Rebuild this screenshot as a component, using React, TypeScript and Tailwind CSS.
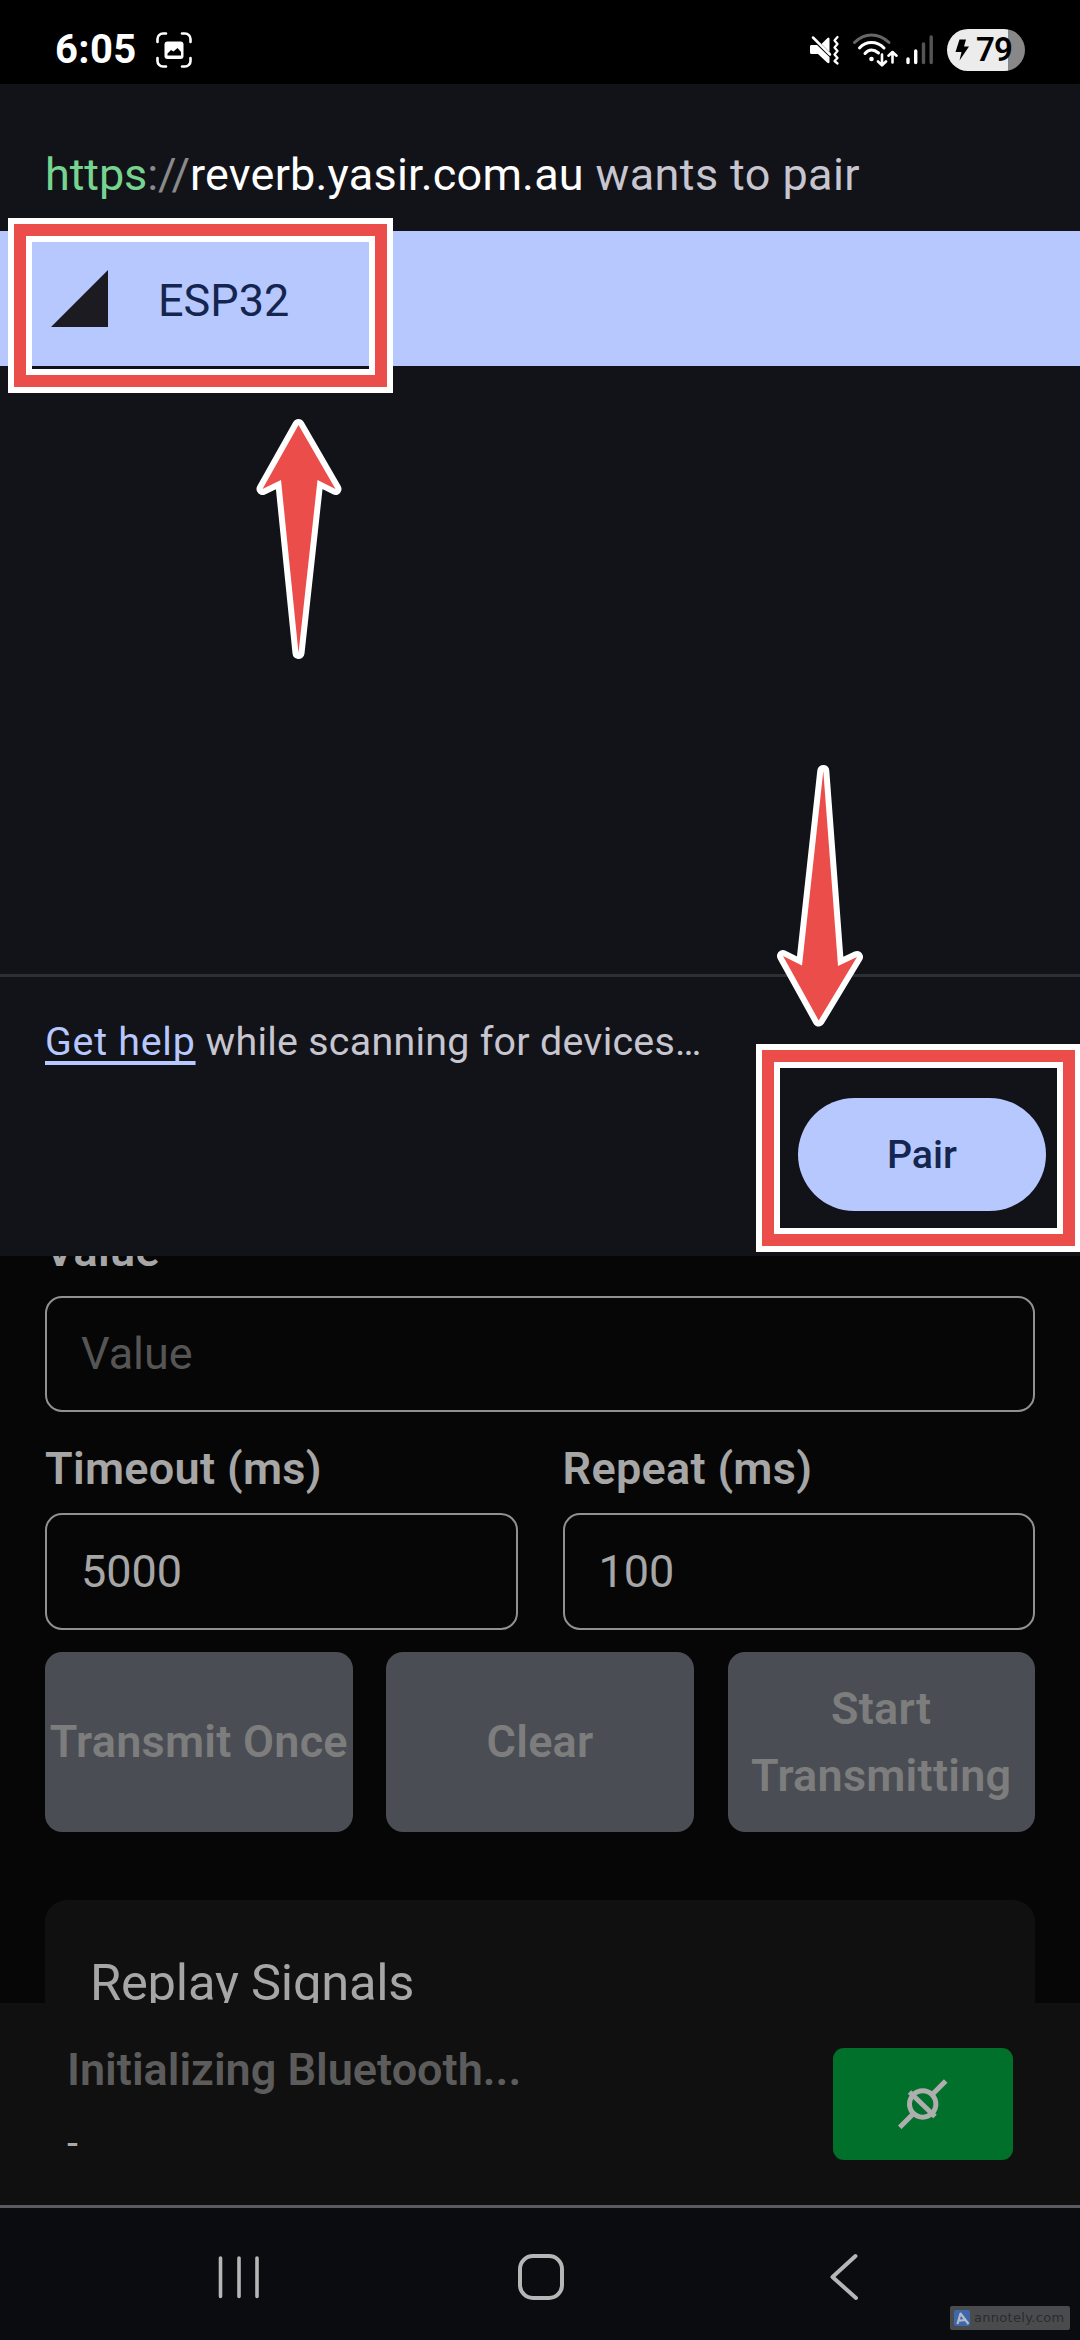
import React from "react";

function StatusBar() {
  return (
    <header className="flex h-[84px] shrink-0 items-center justify-between bg-black pt-[16px] pl-[55px] pr-[55px] text-white">
      <div className="flex items-center gap-[19px]">
        <span className="text-[40px] leading-[46px] font-bold tracking-[0.4px]">6:05</span>
        <svg className="h-[36px] w-[36px]" viewBox="0 0 36 36" fill="none">
          <path
            d="M1.5 10V7a5.5 5.5 0 0 1 5.500-5.500H10M26 1.500H29A5.500 5.500 0 0 1 34.500 7V10M34.500 26V29A5.500 5.500 0 0 1 29 34.500H26M10 34.500H7A5.500 5.500 0 0 1 1.500 29V26"
            stroke="white"
            strokeWidth="2.600"
            strokeLinecap="round"
          />
          <rect x="8.500" y="9.500" width="19" height="17.500" rx="3" fill="white" />
          <path d="M11.500 23.500V21.500L15 18L17.500 19.500L21.500 16L25 20V23.500Z" fill="black" />
        </svg>
      </div>
      <div className="flex items-center">
        <svg className="h-[36px] w-[32px]" viewBox="0 0 32 36" fill="none">
          <path d="M2 13Q1 13 1 14.500V20.500Q1 22 2.500 22H9L18 30.500Q20.500 32 20.500 30V25L8 13Z" fill="white" />
          <path d="M12.500 12L18.500 6Q20.500 4.500 20.500 7V20Z" fill="white" />
          <path d="M4 5.500L21 22.500" stroke="white" strokeWidth="2.500" strokeLinecap="round" />
          <path
            d="M28.500 5L25.500 8.500L28.500 12L25.500 15.500L28.500 19L25.500 22.500L28.500 26L25.500 29L28.500 31.500"
            stroke="white"
            strokeWidth="2.300"
            strokeLinecap="round"
            strokeLinejoin="round"
          />
        </svg>
        <svg className="ml-[11px] h-[36px] w-[46px]" viewBox="0 0 46 36" fill="none" strokeLinecap="round">
          <path d="M2.500 10.500Q10 3 19.500 3T37 10.500" stroke="#666" strokeWidth="3" />
          <path d="M7.500 16Q12.500 10.500 19.500 10.500T32 16" stroke="white" strokeWidth="3" />
          <path d="M13 21.500Q16 18 19.500 18T26.500 21" stroke="white" strokeWidth="3" />
          <circle cx="19.500" cy="27" r="2.300" fill="white" />
          <path
            d="M30 22.500V33M26 29.500L30 33.300L34 29.500M40.500 30.500V20M36.500 23.700L40.500 20L44.500 23.700"
            stroke="white"
            strokeWidth="2.600"
            strokeLinejoin="round"
          />
        </svg>
        <svg className="ml-[8px] h-[36px] w-[28px]" viewBox="0 0 28 36" strokeWidth="3.400" strokeLinecap="round">
          <path d="M2 27V30.500M9.700 19V30.500" stroke="white" />
          <path d="M17.500 12V30.500M25.200 5V30.500" stroke="#555" />
        </svg>
        <div className="ml-[13px] flex h-[42px] w-[78px] items-center rounded-full bg-[linear-gradient(90deg,#ececec_61px,#888888_61px)] pl-[8px] text-black">
          <svg className="h-[22px] w-[15px]" viewBox="0 0 15 22">
            <path d="M4.500 0.500H11L9 7.500H14L4.500 21.500L6.500 13H0.500Z" fill="black" />
          </svg>
          <span className="ml-[6px] text-[33px] leading-[42px] font-semibold tracking-[-0.8px]">79</span>
        </div>
      </div>
    </header>
  );
}

function PairDialog() {
  return (
    <section className="flex h-[1172px] shrink-0 flex-col bg-[#121318] text-[#c7c6d0]">
      <h1 className="h-[147px] whitespace-pre pt-[64px] pl-[45px] text-[45px] leading-[53px] font-normal tracking-[0.4px]">
        <span className="tracking-[-0.1px] text-[#77d490]">https</span>
        <span className="tracking-[-0.1px] text-[#8a8a8a]">://</span>
        <span className="tracking-[0.2px] text-white">reverb.yasir.com.au</span> wants to pair
      </h1>
      <div className="flex h-[135px] items-center bg-[#b6c8fe] pl-[51px] text-[#14264f]">
        <svg className="h-[57px] w-[57px]" viewBox="0 0 57 57">
          <path d="M0 57L57 0V57Z" fill="#1b1b21" />
        </svg>
        <span className="ml-[50px] pt-[4px] text-[45px] leading-[53px]">ESP32</span>
      </div>
      <div className="h-[608px]" />
      <div className="h-[3px] bg-[#2e2f33]" />
      <p className="pt-[42px] pl-[45px] text-[39.375px] leading-[46px] tracking-[0.27px]">
        <a className="tracking-[0.75px] text-[#b6c8fe] underline decoration-[3.5px] underline-offset-[6px] [text-decoration-skip-ink:none]">
          Get help
        </a>{" "}
        while scanning for devices…
      </p>
      <div className="mt-[33px] flex justify-end pr-[34px]">
        <button className="h-[113px] w-[248px] rounded-full bg-[#b6c8fe] text-[39.375px] font-medium text-[#14264f]">
          Pair
        </button>
      </div>
    </section>
  );
}

function Field({ label, children, muted }: { label: string; children: React.ReactNode; muted?: boolean }) {
  return (
    <div className="flex flex-col gap-[11.25px]">
      <label className="text-[45px] leading-[67.5px] font-semibold tracking-[0.3px]">{label}</label>
      <div
        className={
          "flex h-[116.25px] items-center rounded-[17px] border-2 border-[#919195] pl-[34px] text-[45px] " +
          (muted ? "text-[#555555]" : "text-[#a6a6a6]")
        }
      >
        {children}
      </div>
    </div>
  );
}

function ActionButton({ children }: { children: React.ReactNode }) {
  return (
    <button className="h-[180px] rounded-[17px] bg-[#4b4d54] text-center text-[45px] leading-[67.5px] font-semibold tracking-[0.25px] text-[#7d7d7d]">
      {children}
    </button>
  );
}

function PageContent() {
  return (
    <main className="h-[747px] shrink-0 overflow-hidden bg-[#060606] px-[45px] text-[#a6a6a6]">
      <div className="-mt-[39px] flex flex-col gap-[22.5px]">
        <Field label="Value" muted>
          Value
        </Field>
        <div className="grid grid-cols-2 gap-[45px]">
          <Field label="Timeout (ms)">5000</Field>
          <Field label="Repeat (ms)">100</Field>
        </div>
        <div className="grid grid-cols-3 gap-[33.75px]">
          <ActionButton>
            <span className="-mx-4 whitespace-nowrap">Transmit Once</span>
          </ActionButton>
          <ActionButton>Clear</ActionButton>
          <ActionButton>
            Start
            <br />
            Transmitting
          </ActionButton>
        </div>
      </div>
      <div className="mt-[68px] h-[300px] rounded-[22px] bg-[#101010] px-[45px] pt-[44px]">
        <h2 className="text-[50.625px] leading-[78.75px] tracking-[-0.2px]">Replay Signals</h2>
      </div>
    </main>
  );
}

function ConnectionBar() {
  return (
    <footer className="flex h-[205px] shrink-0 items-start justify-between border-b-[3px] border-[#5b5a62] bg-[#101010] pr-[67px] pl-[67px]">
      <div className="pt-[33px]">
        <p className="text-[45px] leading-[67.5px] font-semibold text-[#5c5c5c]">Initializing Bluetooth...</p>
        <p className="text-[39.375px] leading-[78px] text-[#a9a9a9]">-</p>
      </div>
      <button className="mt-[45px] flex h-[112px] w-[180px] items-center justify-center rounded-[11px] bg-[#00702a]">
        <svg className="h-[50px] w-[50px]" viewBox="0 0 50 50" fill="none" stroke="#aeaeae">
          <circle cx="24.700" cy="25" r="13.200" strokeWidth="5" />
          <path d="M1.700 48.300L14.800 35.200M34.500 15.200L47.700 2M11.500 13L37 37.500" strokeWidth="5" />
        </svg>
      </button>
    </footer>
  );
}

function NavBar() {
  return (
    <nav className="relative flex h-[132px] shrink-0 items-center justify-between bg-[#0b0c10] px-[216px] pt-[5px]">
      <svg className="h-[50px] w-[46px]" viewBox="0 0 46 50" stroke="#b6b6b6" strokeWidth="3.600" strokeLinecap="round">
        <path d="M4.500 6V44.500M23 6V44.500M41 6V44.500" />
      </svg>
      <svg className="h-[50px] w-[50px]" viewBox="0 0 50 50" fill="none" stroke="#b6b6b6" strokeWidth="4">
        <rect x="2" y="4" width="42" height="42" rx="13" />
      </svg>
      <svg className="h-[50px] w-[40px]" viewBox="0 0 40 50" fill="none" stroke="#b6b6b6" strokeWidth="4" strokeLinecap="round" strokeLinejoin="round">
        <path d="M31.500 4L8.500 25L32 46" />
      </svg>
      <div className="absolute right-[10px] bottom-[10px] flex h-[24px] w-[120px] items-center rounded-[2px] bg-[#4a4b4d] pl-[4px]">
        <svg className="h-[16px] w-[16px]" viewBox="0 0 16 16" fill="none">
          <rect width="16" height="16" rx="2" fill="#4067a9" />
          <path d="M3.500 14L6.500 3.500L14.500 14M3.500 10.800L11 10" stroke="#b5bcc8" strokeWidth="2.200" strokeLinejoin="round" />
        </svg>
        <span className="ml-[4px] font-['DejaVu_Sans'] text-[13px] leading-[24px] tracking-[0.3px] text-[#2b2b2d]">annotely.com</span>
      </div>
    </nav>
  );
}

function HighlightFrame({ className }: { className: string }) {
  return (
    <div className={"absolute border-[6px] border-white " + className}>
      <div className="h-full w-full border-[12px] border-[#eb4d4b]">
        <div className="h-full w-full border-[6px] border-white" />
      </div>
    </div>
  );
}

function Arrow({ className, points }: { className: string; points: string }) {
  return (
    <svg className={"absolute h-[270px] w-[100px] " + className} viewBox="0 0 100 270">
      <polygon points={points} fill="#eb4d4b" stroke="white" strokeWidth="12" strokeLinejoin="round" paintOrder="stroke" />
    </svg>
  );
}

export default function App() {
  return (
    <div className="relative flex h-[2340px] w-[1080px] flex-col overflow-hidden bg-black font-[Roboto,sans-serif]">
      <StatusBar />
      <PairDialog />
      <PageContent />
      <ConnectionBar />
      <NavBar />
      <HighlightFrame className="top-[218px] left-[8px] h-[175px] w-[385px]" />
      <HighlightFrame className="top-[1044px] left-[756px] h-[208px] w-[325px]" />
      <Arrow className="top-[410px] left-[250px]" points="48.5,15 85.5,79 67.5,70 48.5,243 31,70 12.5,79" />
      <Arrow className="top-[760px] left-[770px]" points="53.3,11 68,206 87,197 48.7,260.5 13,196 32,205.5" />
    </div>
  );
}
